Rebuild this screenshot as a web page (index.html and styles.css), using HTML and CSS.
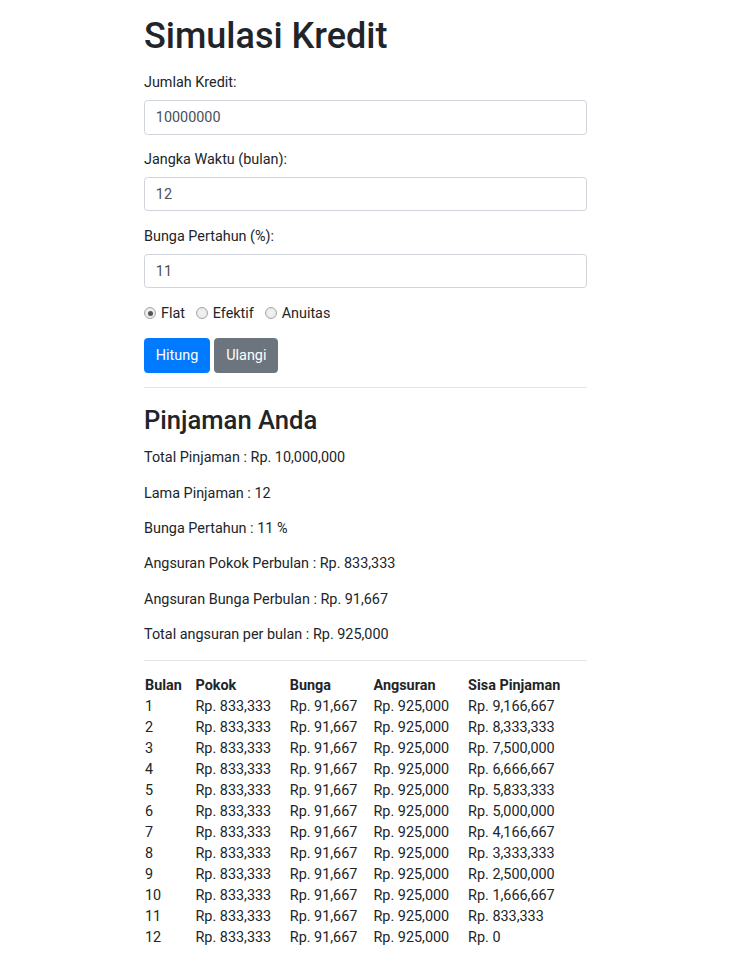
FILE: index.html
```html
<!DOCTYPE html>
<html lang="id">
<head>
<meta charset="utf-8">
<title>Simulasi Kredit</title>
<link rel="stylesheet" href="styles.css">
</head>
<body>
<div class="container">
  <h1 class="title">Simulasi Kredit</h1>
  <form class="form">
    <div class="form-group">
      <label class="label" for="jumlah">Jumlah Kredit:</label>
      <input class="input" id="jumlah" type="text" value="10000000">
    </div>
    <div class="form-group">
      <label class="label" for="jangka">Jangka Waktu (bulan):</label>
      <input class="input" id="jangka" type="text" value="12">
    </div>
    <div class="form-group">
      <label class="label" for="bunga">Bunga Pertahun (%):</label>
      <input class="input" id="bunga" type="text" value="11">
    </div>
    <div class="form-group radios">
      <label class="radio-item"><input class="radio" type="radio" name="jenis" checked> Flat</label>
      <label class="radio-item"><input class="radio" type="radio" name="jenis"> Efektif</label>
      <label class="radio-item"><input class="radio" type="radio" name="jenis"> Anuitas</label>
    </div>
    <div class="buttons">
      <button class="btn btn-primary" type="button">Hitung</button>
      <button class="btn btn-secondary" type="button">Ulangi</button>
    </div>
  </form>
  <hr class="divider">
  <h2 class="subtitle">Pinjaman Anda</h2>
  <p class="info">Total Pinjaman : Rp. 10,000,000</p>
  <p class="info">Lama Pinjaman : 12</p>
  <p class="info">Bunga Pertahun : 11 %</p>
  <p class="info">Angsuran Pokok Perbulan : Rp. 833,333</p>
  <p class="info">Angsuran Bunga Perbulan : Rp. 91,667</p>
  <p class="info">Total angsuran per bulan : Rp. 925,000</p>
  <hr class="divider">
  <table class="schedule">
    <colgroup>
      <col class="c-bulan"><col class="c-pokok"><col class="c-bunga"><col class="c-angsuran"><col class="c-sisa">
    </colgroup>
    <thead>
      <tr><th>Bulan</th><th>Pokok</th><th>Bunga</th><th>Angsuran</th><th>Sisa Pinjaman</th></tr>
    </thead>
    <tbody>
      <tr><td>1</td><td>Rp. 833,333</td><td>Rp. 91,667</td><td>Rp. 925,000</td><td>Rp. 9,166,667</td></tr>
      <tr><td>2</td><td>Rp. 833,333</td><td>Rp. 91,667</td><td>Rp. 925,000</td><td>Rp. 8,333,333</td></tr>
      <tr><td>3</td><td>Rp. 833,333</td><td>Rp. 91,667</td><td>Rp. 925,000</td><td>Rp. 7,500,000</td></tr>
      <tr><td>4</td><td>Rp. 833,333</td><td>Rp. 91,667</td><td>Rp. 925,000</td><td>Rp. 6,666,667</td></tr>
      <tr><td>5</td><td>Rp. 833,333</td><td>Rp. 91,667</td><td>Rp. 925,000</td><td>Rp. 5,833,333</td></tr>
      <tr><td>6</td><td>Rp. 833,333</td><td>Rp. 91,667</td><td>Rp. 925,000</td><td>Rp. 5,000,000</td></tr>
      <tr><td>7</td><td>Rp. 833,333</td><td>Rp. 91,667</td><td>Rp. 925,000</td><td>Rp. 4,166,667</td></tr>
      <tr><td>8</td><td>Rp. 833,333</td><td>Rp. 91,667</td><td>Rp. 925,000</td><td>Rp. 3,333,333</td></tr>
      <tr><td>9</td><td>Rp. 833,333</td><td>Rp. 91,667</td><td>Rp. 925,000</td><td>Rp. 2,500,000</td></tr>
      <tr><td>10</td><td>Rp. 833,333</td><td>Rp. 91,667</td><td>Rp. 925,000</td><td>Rp. 1,666,667</td></tr>
      <tr><td>11</td><td>Rp. 833,333</td><td>Rp. 91,667</td><td>Rp. 925,000</td><td>Rp. 833,333</td></tr>
      <tr><td>12</td><td>Rp. 833,333</td><td>Rp. 91,667</td><td>Rp. 925,000</td><td>Rp. 0</td></tr>
    </tbody>
  </table>
</div>
</body>
</html>
```

FILE: styles.css
```css
* { box-sizing: border-box; }

html, body {
  margin: 0;
  padding: 0;
  background: #fff;
}

body {
  font-family: Roboto, "Open Sans", sans-serif;
  font-size: 14.4px;
  line-height: 21px;
  color: #212529;
}

.container {
  width: 443px;
  margin: 0 auto;
}

.title {
  font-size: 36px;
  font-weight: 500;
  line-height: 43.2px;
  margin: 15px 0 14px;
}

.form-group {
  margin-bottom: 14.4px;
}

.label {
  display: block;
  margin-bottom: 7.2px;
}

.input {
  display: block;
  width: 100%;
  height: 34.2px;
  padding: 0 10.8px;
  font-family: inherit;
  font-size: 14.4px;
  color: #495057;
  background: #fff;
  border: 1px solid #ced4da;
  border-radius: 3.6px;
  outline: none;
}

.radios {
  display: flex;
  align-items: center;
  height: 21.6px;
}

.radio-item {
  display: inline-flex;
  align-items: center;
  margin-right: 10.8px;
}

.radio {
  -webkit-appearance: none;
  appearance: none;
  width: 12px;
  height: 12px;
  margin: 0 5px 0 0;
  border: 1px solid #a6a6a6;
  border-radius: 50%;
  background: radial-gradient(circle at 50% 50%, #f4f4f4 0, #e4e4e4 100%);
  position: relative;
}

.radio:checked::after {
  content: "";
  position: absolute;
  left: 2.5px;
  top: 2.5px;
  width: 5px;
  height: 5px;
  border-radius: 50%;
  background: #555;
}

.buttons {
  display: flex;
  gap: 4.4px;
}

.btn {
  font-family: inherit;
  font-size: 14.4px;
  line-height: 21.6px;
  padding: 5.4px 10.8px;
  border: 1px solid transparent;
  border-radius: 3.6px;
  color: #fff;
  cursor: pointer;
}

.btn-primary {
  background: #007bff;
  border-color: #007bff;
}

.btn-secondary {
  background: #6c757d;
  border-color: #6c757d;
}

.divider {
  margin: 14.4px 0;
  border: 0;
  border-top: 1px solid rgba(0, 0, 0, 0.1);
}

.subtitle {
  font-size: 25.6px;
  font-weight: 500;
  line-height: 34.56px;
  margin: 0 0 10px;
}

.info {
  margin: 0 0 14.4px;
}

.schedule {
  width: 100%;
  border-collapse: collapse;
  table-layout: fixed;
}

.schedule th,
.schedule td {
  padding: 0 1px;
  height: 21px;
  text-align: left;
  white-space: nowrap;
}

.schedule th {
  font-weight: 700;
}

.c-bulan { width: 50.5px; }
.c-pokok { width: 94.3px; }
.c-bunga { width: 83.7px; }
.c-angsuran { width: 94.6px; }
.c-sisa { width: auto; }
```
